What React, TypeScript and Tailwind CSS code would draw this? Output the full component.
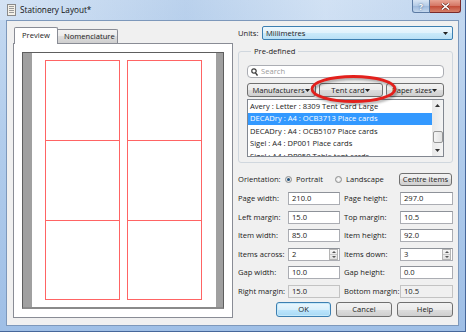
import React from 'react'

const btn =
  'border border-[#707070] rounded-[3px] bg-[linear-gradient(#f2f2f2_0%,#ebebeb_50%,#dddddd_50%,#cfcfcf_100%)] flex items-center justify-center'
const field = 'h-[13px] border border-[#abadb3] border-t-[#8e9299] bg-white pl-[3px] flex items-center'
const readonlyField = 'h-[13px] border border-[#c3c3c3] bg-[#f0f0f0] pl-[3px] flex items-center'

function Arrow() {
  return (
    <svg width="5" height="3" viewBox="0 0 5 3" className="shrink-0">
      <path d="M0 0h5L2.5 3z" fill="#222" />
    </svg>
  )
}

function Combo({ label, className }: { label: string; className: string }) {
  return (
    <div className={`${btn} h-[14px] justify-between pl-[3px] pr-[4px] ${className}`}>
      <span className="whitespace-nowrap">{label}</span>
      <Arrow />
    </div>
  )
}

function Spin() {
  return (
    <div className="ml-auto mr-[1px] w-[9px] h-[11px] flex flex-col border border-[#b5b5b5] bg-[linear-gradient(#f6f6f6,#e0e0e0)]">
      <div className="flex-1 flex items-center justify-center border-b border-[#c8c8c8]">
        <svg width="4" height="2" viewBox="0 0 4 2"><path d="M0 2h4L2 0z" fill="#555" /></svg>
      </div>
      <div className="flex-1 flex items-center justify-center">
        <svg width="4" height="2" viewBox="0 0 4 2"><path d="M0 0h4L2 2z" fill="#555" /></svg>
      </div>
    </div>
  )
}

function Radio({ on }: { on?: boolean }) {
  return (
    <span className="w-[7px] h-[7px] rounded-full border border-[#8e8f8f] bg-[radial-gradient(#ffffff,#d4d4d4)] flex items-center justify-center">
      {on && <span className="w-[3px] h-[3px] rounded-full bg-[#1d4f7a]" />}
    </span>
  )
}

const rows: [string, string, boolean, string, string, boolean, boolean][] = [
  ['Page width:', '210.0', false, 'Page height:', '297.0', false, false],
  ['Left margin:', '15.0', false, 'Top margin:', '10.5', false, false],
  ['Item width:', '85.0', false, 'Item height:', '92.0', false, false],
  ['Items across:', '2', true, 'Items down:', '3', true, false],
  ['Gap width:', '10.0', false, 'Gap height:', '0.0', false, false],
  ['Right margin:', '15.0', false, 'Bottom margin:', '10.5', false, true],
]

const listItems = [
  'Avery : Letter : 8309 Tent Card Large',
  'DECADry : A4 : OCB3713 Place cards',
  'DECADry : A4 : OCB5107 Place cards',
  'Sigel : A4 : DP001 Place cards',
  'Sigel : A4 : DP050 Table tent cards',
]

function Column() {
  return (
    <div className="w-[75px] border border-[#ff6464] flex flex-col">
      <div className="h-[79px]" />
      <div className="h-[80px] border-t border-[#ff6464]" />
      <div className="h-[79px] border-t border-[#ff6464]" />
    </div>
  )
}

export default function App() {
  return (
    <div className="w-[466px] h-[332px] overflow-hidden flex flex-col bg-[linear-gradient(180deg,#c6daf1_0%,#b2cdec_40%,#9fbfe6_100%)] border-r border-b border-[#46679a] font-['Open_Sans',sans-serif] text-[7.6px] leading-[11px] text-[#1b1b1b]">
      {/* title bar */}
      <div className="h-[20px] flex items-start shrink-0 bg-[linear-gradient(90deg,rgba(255,255,255,0.25),rgba(120,160,210,0.15)_40%,rgba(255,255,255,0.2)_70%,rgba(150,180,220,0.1))]">
        <div className="ml-[7px] mt-[4px] w-[9px] h-[12px] border border-[#8a8a8a] bg-[#f4f1e8] flex flex-col gap-[1px] pt-[1px] px-[1px]">
          <div className="h-px bg-[#9a9a9a]" />
          <div className="h-px bg-[#9a9a9a]" />
          <div className="h-px bg-[#9a9a9a]" />
          <div className="h-px bg-[#9a9a9a]" />
        </div>
        <span className="ml-[4px] mt-[4px] text-[8.2px] text-[#111]">Stationery Layout*</span>
        <div className="ml-auto mr-[4px] flex">
          <div className="w-[18px] h-[13px] border border-[#5b7aa3] border-t-0 rounded-bl-[3px] bg-[linear-gradient(#d9e6f5,#b4cbe6_50%,#9db9dc_50%,#c4d8ee)] flex items-center justify-center text-white text-[8px] font-bold [text-shadow:0_0_2px_#2a4870]">?</div>
          <div className="w-[31px] h-[13px] border border-[#7a2a2a] border-t-0 border-l-0 rounded-br-[3px] bg-[linear-gradient(#e8a493,#d47563_50%,#c24a35_50%,#d6806a)] flex items-center justify-center">
            <svg width="9" height="7" viewBox="0 0 9 7">
              <path d="M1 0.5l7 6M8 0.5l-7 6" stroke="#5a1a10" strokeWidth="2.6" />
              <path d="M1 0.5l7 6M8 0.5l-7 6" stroke="#fff" strokeWidth="1.6" />
            </svg>
          </div>
        </div>
      </div>

      {/* client area */}
      <div className="mx-[6px] mb-[5px] h-[307px] border border-[#7d98bb] bg-[#f0f0f0] flex gap-[5px] pl-[6px] pt-[5px]">
        {/* tab control */}
        <div className="w-[220px] flex flex-col pt-[1px]">
          <div className="h-[16px] flex items-end pl-[1px]">
            <div className="w-[44px] h-[17px] -mb-px z-10 border border-b-0 border-[#898c95] bg-white rounded-t-[2px] pl-[7px] pt-[2px]">Preview</div>
            <div className="w-[60px] h-[14px] border border-l-0 border-b-0 border-[#898c95] rounded-tr-[2px] bg-[linear-gradient(#f3f3f3,#ebebeb_50%,#dddddd_50%,#cfcfcf)] pl-[6px] pt-[1px] whitespace-nowrap">Nomenclature</div>
          </div>
          <div className="h-[275px] border border-[#898c95] bg-white p-[8px]">
            <div className="h-full border-x border-t border-[#5e5e5e] border-b-2 border-b-[#8a8a8a] bg-[#a0a0a0] flex pl-[9px] pr-[7px]">
              <div className="flex-1 bg-white flex items-start gap-[7px] pl-[13px] pt-[7px] overflow-hidden">
                <Column />
                <Column />
              </div>
            </div>
          </div>
        </div>

        {/* settings */}
        <div className="w-[215px] flex flex-col">
          <div className="flex items-center h-[14px]">
            <span className="w-[24px]">Units:</span>
            <div className="flex-1 h-[14px] border border-[#3c7fb1] rounded-[2px] bg-[linear-gradient(#edf7fd,#e0f2fc_50%,#cbeafa_50%,#b9e0f6)] flex items-center justify-between pl-[3px] pr-[4px]">
              <span>Millimetres</span>
              <Arrow />
            </div>
          </div>

          <fieldset className="mt-[6px] border border-[#d0d7de] rounded-[3px] px-[8px] pt-[8px] pb-[5px]">
            <legend className="ml-[4px] px-[3px] leading-[11px]">Pre-defined</legend>
            <div className="h-[13px] border border-[#abadb3] rounded-[4px] bg-white flex items-center pl-[3px] gap-[3px]">
              <svg width="7" height="8" viewBox="0 0 7 8">
                <circle cx="3" cy="3" r="2.2" fill="none" stroke="#3a3a3a" strokeWidth="1.2" />
                <path d="M4.5 4.8L6.5 7.5" stroke="#3a3a3a" strokeWidth="1.4" />
              </svg>
              <span className="text-[#9a9a9a]">Search</span>
            </div>
            <div className="relative mt-[5px] flex gap-[3px]">
              <Combo label="Manufacturers" className="w-[69px]" />
              <Combo label="Tent card" className="w-[64px]" />
              <Combo label="Paper sizes" className="flex-1" />
              <svg width="89" height="31" viewBox="0 0 89 31" className="absolute left-[63px] top-[-8px] pointer-events-none">
                <defs>
                  <filter id="sh" x="-10%" y="-20%" width="120%" height="140%">
                    <feGaussianBlur stdDeviation="1" />
                  </filter>
                </defs>
                <ellipse cx="45" cy="16" rx="41.5" ry="12.5" fill="none" stroke="#000" strokeOpacity="0.3" strokeWidth="3" filter="url(#sh)" />
                <ellipse cx="43.5" cy="14" rx="41.5" ry="12.5" fill="none" stroke="#e3201c" strokeWidth="2.8" />
              </svg>
            </div>
            <div className="mt-[2px] h-[58px] border border-[#828790] bg-white flex overflow-hidden">
              <div className="flex-1 flex flex-col overflow-hidden">
                {listItems.map((t, i) => (
                  <div
                    key={t}
                    className={`h-[12.5px] shrink-0 flex items-center pl-[2px] whitespace-nowrap ${
                      i === 1 ? 'bg-[#3399ff] text-white' : ''
                    }`}
                  >
                    {t}
                  </div>
                ))}
              </div>
              <div className="w-[11px] shrink-0 bg-[linear-gradient(90deg,#e8e8e8,#f4f4f4)] flex flex-col items-center">
                <div className="h-[11px] flex items-center justify-center">
                  <svg width="5" height="3" viewBox="0 0 5 3"><path d="M0 3h5L2.5 0z" fill="#333" /></svg>
                </div>
                <div className="mt-[20px] w-[10px] h-[12px] border border-[#979797] rounded-[2px] bg-[linear-gradient(90deg,#f4f4f4,#e2e2e2)]" />
                <div className="mt-auto h-[11px] flex items-center justify-center">
                  <svg width="5" height="3" viewBox="0 0 5 3"><path d="M0 0h5L2.5 3z" fill="#333" /></svg>
                </div>
              </div>
            </div>
          </fieldset>

          <div className="mt-[10px] h-[12px] flex items-center">
            <span className="w-[47px]">Orientation:</span>
            <Radio on />
            <span className="ml-[4px] w-[39px]">Portrait</span>
            <Radio />
            <span className="ml-[4px]">Landscape</span>
            <div className={`${btn} ml-auto w-[53px] h-[13px] mr-[1px]`}>Centre items</div>
          </div>

          <div className="mt-[7px] grid grid-cols-[50px_52px_60px_53px] gap-y-[5.6px] items-center">
            {rows.map(([l1, v1, s1, l2, v2, s2, ro]) => (
              <React.Fragment key={l1}>
                <span className="whitespace-nowrap">{l1}</span>
                <div className={ro ? readonlyField : field}>
                  <span>{v1}</span>
                  {s1 && <Spin />}
                </div>
                <span className="pl-[4px] whitespace-nowrap">{l2}</span>
                <div className={ro ? readonlyField : field}>
                  <span>{v2}</span>
                  {s2 && <Spin />}
                </div>
              </React.Fragment>
            ))}
          </div>

          <div className="mt-[4px] flex justify-end gap-[5px]">
            <div className="w-[55px] h-[15px] border border-[#3c7fb1] rounded-[3px] bg-[linear-gradient(#eaf6fd,#d9f0fc_50%,#bee6fd_50%,#a7d9f5)] shadow-[inset_0_0_0_1px_#c6e9fa] flex items-center justify-center">OK</div>
            <div className={`${btn} w-[56px] h-[15px]`}>Cancel</div>
            <div className={`${btn} w-[56px] h-[15px]`}>Help</div>
          </div>
        </div>
      </div>
    </div>
  )
}
